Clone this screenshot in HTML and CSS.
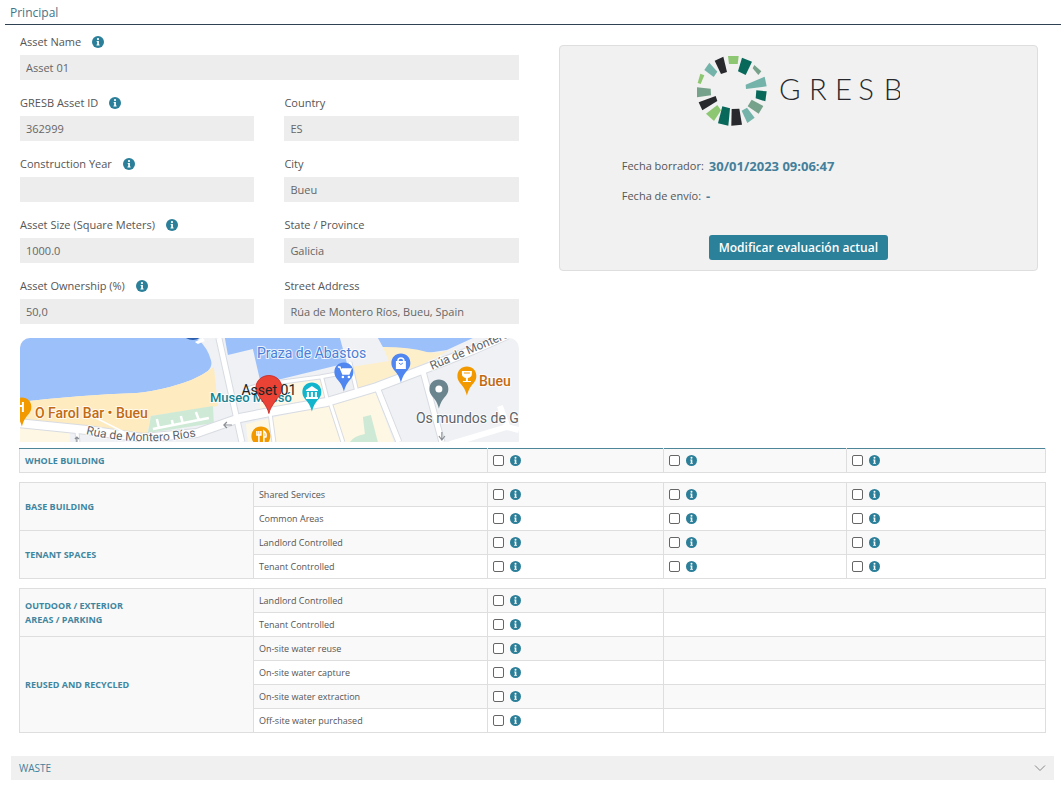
FILE: index.html
```html
<!DOCTYPE html>
<html lang="es">
<head>
<meta charset="utf-8">
<meta name="viewport" content="width=device-width, initial-scale=1">
<title>Principal</title>
<link rel="stylesheet" href="styles.css">
</head>
<body>
<svg class="defs" width="0" height="0" aria-hidden="true">
  <symbol id="info" viewBox="0 0 12 12">
    <circle cx="6" cy="6" r="6" fill="#2b7f99"/>
    <circle cx="6" cy="3.1" r="1.1" fill="#fff"/>
    <path d="M4.7 4.9h2.2v3.7h.7v1H4.5v-1h.7V5.9h-.5z" fill="#fff"/>
  </symbol>
  <symbol id="pin" viewBox="0 0 20 30">
    <path d="M10 0.500C4.500.500.500 4.600.500 10c0 5 3 7 5.500 10.500C8 23.300 9 26 10 29.500c1-3.500 2-6.200 4-9C16.500 17 19.500 15 19.500 10 19.500 4.600 15.500.500 10 .500z"/>
  </symbol>
</svg>

<h1 class="title">Principal</h1>

<main>
  <div class="top">
    <section class="asset">
      <form class="fields">
        <div class="field wide">
          <label for="name">Asset Name <svg class="info"><use href="#info"/></svg></label>
          <input id="name" value="Asset 01" readonly>
        </div>
        <div class="field">
          <label for="gid">GRESB Asset ID <svg class="info"><use href="#info"/></svg></label>
          <input id="gid" value="362999" readonly>
        </div>
        <div class="field">
          <label for="country">Country</label>
          <input id="country" value="ES" readonly>
        </div>
        <div class="field">
          <label for="year">Construction Year <svg class="info"><use href="#info"/></svg></label>
          <input id="year" value="" readonly>
        </div>
        <div class="field">
          <label for="city">City</label>
          <input id="city" value="Bueu" readonly>
        </div>
        <div class="field">
          <label for="size">Asset Size (Square Meters) <svg class="info"><use href="#info"/></svg></label>
          <input id="size" value="1000.0" readonly>
        </div>
        <div class="field">
          <label for="state">State / Province</label>
          <input id="state" value="Galicia" readonly>
        </div>
        <div class="field">
          <label for="own">Asset Ownership (%) <svg class="info"><use href="#info"/></svg></label>
          <input id="own" value="50,0" readonly>
        </div>
        <div class="field">
          <label for="street">Street Address</label>
          <input id="street" value="Rúa de Montero Ríos, Bueu, Spain" readonly>
        </div>
      </form>

      <svg class="map" viewBox="0 0 499 104" preserveAspectRatio="xMidYMid slice" role="img" aria-label="Asset 01">
        <rect width="499" height="104" fill="#eff1f4"/>
        <path d="M0 0H177Q188 10 191 22Q193 28 188 33Q176 42 150 49Q130 54 117 55Q60 57 0 64z" fill="#9cc0f9"/>
        <path d="M0 64Q60 57 117 55Q130 54 150 49Q176 42 188 33L194 29L198 68L131 78L127 97L67 90L0 82z" fill="#feebbf"/>
        <path d="M0 88L50 94V104H0z" fill="#fef7e3"/>
        <path d="M131 78L193 68L194 85L128 95z" fill="#ceead6"/>
        <path d="M133 91L189 80M137 81l2 9M161 78l2 8M176 74l3 8M152 82l1 5" stroke="#fff" stroke-width="2.500" fill="none"/>
        <path d="M205 0H320L327 25L241 46L233 11L208 17z" fill="#9cc0f9"/>
        <path d="M358 0H453L427 12L407 15L363 9z" fill="#9cc0f9"/>
        <path d="M363 9Q390 9 407 14Q420 16 430 12L402 27L337 51L331 29L369 23z" fill="#feefcb"/>
        <path d="M240 49L303 40L307 58L240 72z" fill="#fef7e3"/>
        <path d="M226 86L307 67L355 53L374 104H228z" fill="#fef7e3"/>
        <path d="M343 79L351 77L358 104H330Q334 98 345 96z" fill="#ceead6"/>
        <g fill="none" stroke="#d8dce2" stroke-linejoin="round">
          <path d="M-3 85L67 92L123 100L177 95L220 80L250 74L307 64L357 49L407 30L453 12L487 -3" stroke-width="10"/>
          <path d="M199 0L222 104M357 49L379 104M403 33L422 104" stroke-width="7"/>
          <path d="M227 51L240 47L300 39L333 33M330 24L337 54M310 64L323 104M250 74L254 104M57 92L58 104M302 40L308 64" stroke-width="5"/>
        </g>
        <g fill="none" stroke="#fff" stroke-linejoin="round">
          <path d="M-3 85L67 92L123 100L177 95L220 80L250 74L307 64L357 49L407 30L453 12L487 -3" stroke-width="8"/>
          <path d="M199 0L222 104M357 49L379 104M403 33L422 104" stroke-width="5"/>
          <path d="M227 51L240 47L300 39L333 33M330 24L337 54M310 64L323 104M250 74L254 104M57 92L58 104M302 40L308 64" stroke-width="3"/>
          <path d="M430 106L487 89L499 92M480 68L488 90" stroke-width="6"/>
          <path d="M76 80L104 94" stroke-width="1.500"/>
        </g>
        <path d="M175 4l8-4 2 3-7 3z" fill="#fff"/>
        <path d="M166 0h14q-7 4-14 0z" fill="#2c5fae"/>
        <path d="M204 87h8M207 84l-3 3 3 3M57 99v5M55 101l2-2 2 2M422 94v8M419 98l3 4 3-4" fill="none" stroke="#8b9096" stroke-width="1.200"/>
        <path id="street-line" d="M66 96Q122 110 184 97" fill="none"/>
        <g class="map-text">
          <text class="halo gray small"><textPath href="#street-line">Rúa de Montero Ríos</textPath></text>
          <text class="halo gray small" transform="translate(412 32) rotate(-23)">Rúa de Montero</text>
          <text class="halo blue" x="237" y="20">Praza de Abastos</text>
          <text class="halo orange" x="15" y="80">O Farol Bar • Bueu</text>
          <text class="halo teal" x="190" y="64">Museo Massó</text>
          <text class="halo orange" x="459" y="48">Bueu</text>
          <text class="halo gray" x="396" y="85">Os mundos de G</text>
        </g>
        <use href="#pin" x="-8" y="59" width="20" height="30" fill="#f29900"/>
        <path d="M-1 64v10M3 64v4h-4M3 74v-6" stroke="#fff" stroke-width="2" fill="none"/>
        <use href="#pin" x="231" y="88" width="20" height="30" fill="#f29900"/>
        <path d="M237 93v4h4v-4M239 93v11M244 104v-11q3 2 2 6h-2" stroke="#fff" stroke-width="1.500" fill="none"/>
        <use href="#pin" x="282" y="44" width="20" height="30" fill="#12b5cb"/>
        <path d="M286 52l6-4 6 4v1h-12zM287 54h2v5h-2zM291 54h2v5h-2zM295 54h2v5h-2zM286 59h12v2h-12z" fill="#fff"/>
        <use href="#pin" x="314" y="24" width="20" height="30" fill="#4f86f0"/>
        <path d="M318 29h2l3 7h6l2-5h-9" fill="none" stroke="#fff" stroke-width="1.500"/>
        <path d="M321 31h10l-2 5h-6z" fill="#fff"/>
        <circle cx="323" cy="39" r="1.300" fill="#fff"/><circle cx="329" cy="39" r="1.300" fill="#fff"/>
        <use href="#pin" x="371" y="15" width="20" height="30" fill="#4f86f0"/>
        <path d="M376 23h10v8h-10z" fill="#fff"/>
        <path d="M378 23q0-3 3-3t3 3" fill="none" stroke="#fff" stroke-width="1.500"/>
        <path d="M379 25q2 3 4 0" fill="none" stroke="#4f86f0"/>
        <use href="#pin" x="409" y="41" width="20" height="30" fill="#6b858f"/>
        <circle cx="419" cy="51" r="3.500" fill="#fff"/>
        <use href="#pin" x="437" y="28" width="20" height="30" fill="#f29900"/>
        <path d="M442 33h10v3q0 3-4 4v3h3v1h-8v-1h3v-3q-4-1-4-4z" fill="#fff"/>
        <path d="M444 35h6" stroke="#f29900"/>
        <path d="M249 37.500c-7.500 0-13 5.500-13 12.500 0 5 3 8 6.500 13 3.500 5 5.500 8 6.500 12.500 1-4.500 3-7.500 6.500-12.500 3.500-5 6.500-8 6.500-13 0-7-5.500-12.500-13-12.500z" fill="#ea4335" stroke="#c5221f" stroke-width=".800"/>
        <text class="pin-label" x="249" y="57" text-anchor="middle">Asset 01</text>
      </svg>
    </section>

    <aside class="panel">
      <svg class="logo" viewBox="54 30 612 216" role="img" aria-label="GRESB">
        <g fill="#8dc771">
          <path d="M150 33L182 33 179 57 153 57z"/>
          <path d="M118 180L129 196 108 228 84 206z"/>
          <path d="M67 86L79 91 68 117 59 114z"/>
        </g>
        <g fill="#08685a">
          <path d="M192 38L222 50 203 90 180 79z"/>
          <path d="M235 136L266 139 262 169 233 160z"/>
          <path d="M133 184L156 190 151 242 120 235z"/>
        </g>
        <g fill="#76a18a">
          <path d="M229 60L250 79 241 90 224 70z"/>
          <path d="M221 164L256 183 242 206 209 184z"/>
          <path d="M57 127L98 131 99 151 57 157z"/>
        </g>
        <g fill="#73b3aa">
          <path d="M260 95L266 124 204 132 203 119z"/>
          <path d="M207 188L230 218 208 234 191 197z"/>
          <path d="M94 53L118 80 107 96 79 75z"/>
        </g>
        <g fill="#28292d">
          <path d="M161 192L184 191 192 239 160 242z"/>
          <path d="M113 153L118 168 73 196 62 172z"/>
          <path d="M136 35L147 81 129 87 110 47z"/>
        </g>
        <text class="wordmark" x="303 393 471 541 617" y="164">GRESB</text>
      </svg>
      <dl class="dates">
        <div><dt>Fecha borrador:</dt><dd>30/01/2023 09:06:47</dd></div>
        <div><dt>Fecha de envío:</dt><dd>-</dd></div>
      </dl>
      <button class="primary" type="button">Modificar evaluación actual</button>
    </aside>
  </div>

  <div class="tables">
    <table class="grid accent">
      <colgroup><col class="c1"><col class="c2"><col class="c3"><col class="c4"><col></colgroup>
      <tr>
        <th colspan="2" scope="row">WHOLE BUILDING</th>
        <td><label class="check"><input type="checkbox" aria-label="Whole building 1"><svg class="info"><use href="#info"/></svg></label></td>
        <td><label class="check"><input type="checkbox" aria-label="Whole building 2"><svg class="info"><use href="#info"/></svg></label></td>
        <td><label class="check"><input type="checkbox" aria-label="Whole building 3"><svg class="info"><use href="#info"/></svg></label></td>
      </tr>
    </table>

    <table class="grid">
      <colgroup><col class="c1"><col class="c2"><col class="c3"><col class="c4"><col></colgroup>
      <tr>
        <th rowspan="2">BASE BUILDING</th>
        <td>Shared Services</td>
        <td><label class="check"><input type="checkbox" aria-label="Shared Services 1"><svg class="info"><use href="#info"/></svg></label></td>
        <td><label class="check"><input type="checkbox" aria-label="Shared Services 2"><svg class="info"><use href="#info"/></svg></label></td>
        <td><label class="check"><input type="checkbox" aria-label="Shared Services 3"><svg class="info"><use href="#info"/></svg></label></td>
      </tr>
      <tr>
        <td>Common Areas</td>
        <td><label class="check"><input type="checkbox" aria-label="Common Areas 1"><svg class="info"><use href="#info"/></svg></label></td>
        <td><label class="check"><input type="checkbox" aria-label="Common Areas 2"><svg class="info"><use href="#info"/></svg></label></td>
        <td><label class="check"><input type="checkbox" aria-label="Common Areas 3"><svg class="info"><use href="#info"/></svg></label></td>
      </tr>
      <tr>
        <th rowspan="2">TENANT SPACES</th>
        <td>Landlord Controlled</td>
        <td><label class="check"><input type="checkbox" aria-label="Landlord Controlled 1"><svg class="info"><use href="#info"/></svg></label></td>
        <td><label class="check"><input type="checkbox" aria-label="Landlord Controlled 2"><svg class="info"><use href="#info"/></svg></label></td>
        <td><label class="check"><input type="checkbox" aria-label="Landlord Controlled 3"><svg class="info"><use href="#info"/></svg></label></td>
      </tr>
      <tr>
        <td>Tenant Controlled</td>
        <td><label class="check"><input type="checkbox" aria-label="Tenant Controlled 1"><svg class="info"><use href="#info"/></svg></label></td>
        <td><label class="check"><input type="checkbox" aria-label="Tenant Controlled 2"><svg class="info"><use href="#info"/></svg></label></td>
        <td><label class="check"><input type="checkbox" aria-label="Tenant Controlled 3"><svg class="info"><use href="#info"/></svg></label></td>
      </tr>
    </table>

    <table class="grid">
      <colgroup><col class="c1"><col class="c2"><col class="c3"><col></colgroup>
      <tr>
        <th rowspan="2">OUTDOOR / EXTERIOR<br>AREAS / PARKING</th>
        <td>Landlord Controlled</td>
        <td><label class="check"><input type="checkbox" aria-label="Outdoor, Landlord Controlled"><svg class="info"><use href="#info"/></svg></label></td>
        <td></td>
      </tr>
      <tr>
        <td>Tenant Controlled</td>
        <td><label class="check"><input type="checkbox" aria-label="Outdoor, Tenant Controlled"><svg class="info"><use href="#info"/></svg></label></td>
        <td></td>
      </tr>
      <tr>
        <th rowspan="4">REUSED AND RECYCLED</th>
        <td>On-site water reuse</td>
        <td><label class="check"><input type="checkbox" aria-label="On-site water reuse"><svg class="info"><use href="#info"/></svg></label></td>
        <td></td>
      </tr>
      <tr>
        <td>On-site water capture</td>
        <td><label class="check"><input type="checkbox" aria-label="On-site water capture"><svg class="info"><use href="#info"/></svg></label></td>
        <td></td>
      </tr>
      <tr>
        <td>On-site water extraction</td>
        <td><label class="check"><input type="checkbox" aria-label="On-site water extraction"><svg class="info"><use href="#info"/></svg></label></td>
        <td></td>
      </tr>
      <tr>
        <td>Off-site water purchased</td>
        <td><label class="check"><input type="checkbox" aria-label="Off-site water purchased"><svg class="info"><use href="#info"/></svg></label></td>
        <td></td>
      </tr>
    </table>
  </div>

  <button class="accordion" type="button" aria-expanded="false">
    <span>WASTE</span>
    <svg viewBox="0 0 12 12" width="12" height="12" aria-hidden="true"><path d="M1 3.500l5 5 5-5" fill="none" stroke="#888" stroke-width="1"/></svg>
  </button>
</main>
</body>
</html>
```

FILE: styles.css
```css
* { box-sizing: border-box; }

body {
  margin: 0;
  background: #fff;
  color: #555;
  font: 11px/18px "Open Sans", "Liberation Sans", sans-serif;
}

.defs { position: absolute; }

.title {
  margin: 0 0 0 5px;
  padding: 3px 5px 2px;
  border-bottom: 1px solid #2f4254;
  color: #447386;
  font-size: 12px;
  font-weight: 400;
  line-height: 19px;
}

.top {
  display: grid;
  grid-template-columns: 51fr 49fr;
  gap: 40px;
  align-items: start;
  padding: 8px 23px 0 20px;
}

.fields {
  display: grid;
  grid-template-columns: 1fr 1fr;
  gap: 14px 30px;
}

.field { display: flex; flex-direction: column; gap: 4px; }
.wide { grid-column: 1 / -1; }
.field label { display: flex; align-items: center; gap: 11px; height: 18px; }
.info { width: 12px; height: 12px; flex: none; }

.field input {
  width: 100%;
  height: 25px;
  padding: 0 6px;
  border: 0;
  border-radius: 0;
  background: #ededed;
  color: #666;
  font: inherit;
}

.map {
  display: block;
  width: 100%;
  height: 104px;
  margin-top: 14px;
  border-radius: 10px 10px 0 0;
}

.map-text { font: 500 14px Roboto, sans-serif; }
.halo { paint-order: stroke; stroke: #fff; stroke-width: 2px; stroke-opacity: .8; }
.small { font-size: 12px; font-weight: 400; }
.gray { fill: #5f6368; font-weight: 400; }
.blue { fill: #4a80d8; font-weight: 400; }
.orange { fill: #c26a14; }
.teal { fill: #138293; font-size: 13px; }
.pin-label { font: 14px Roboto, sans-serif; fill: #222; }

.panel {
  display: flex;
  flex-direction: column;
  align-items: center;
  margin-top: 12px;
  padding: 9px 12px 10px;
  border: 1px solid #dedede;
  border-radius: 4px;
  background: #f1f1f1;
}

.logo { width: 204px; height: 72px; }
.wordmark { font: 300 88px Lato, sans-serif; fill: #28292d; }

.dates { align-self: stretch; margin: 24px 0 0 50px; }
.dates div { display: flex; align-items: center; gap: 5px; height: 30px; }
.dates dd { margin: 0; color: #447f9b; font-size: 13px; font-weight: 700; }

.primary {
  height: 25px;
  margin-top: 24px;
  padding: 0 10px;
  border: 0;
  border-radius: 3px;
  background: #2b809a;
  color: #fff;
  font: 600 12px "Open Sans", sans-serif;
}

.tables {
  display: grid;
  gap: 9px;
  padding: 6px 15px 0 19px;
}

.grid {
  width: 100%;
  table-layout: fixed;
  border-collapse: collapse;
  font-size: 9px;
  line-height: 14px;
}

.c1 { width: 22.8%; }
.c2 { width: 22.8%; }
.c3 { width: 17.2%; }
.c4 { width: 17.8%; }

.grid th, .grid td {
  height: 24px;
  padding: 0 5px;
  border: 1px solid #dedede;
  text-align: left;
}
.grid th { background: #f9f9f9; color: #3f86a0; font-weight: 700; }
.grid tr:nth-child(odd) td { background: #f9f9f9; }
.accent th, .accent td { border-top-color: #4d8797; }

.check { display: flex; align-items: center; gap: 6px; }
.check .info { width: 11px; height: 11px; }
.check input {
  appearance: none;
  width: 11px;
  height: 11px;
  margin: 0;
  border: 1px solid #666;
  border-radius: 2px;
  background: #fff;
}

.accordion {
  display: flex;
  align-items: center;
  justify-content: space-between;
  width: calc(100% - 18px);
  height: 24px;
  margin: 23px 7px 0 11px;
  padding: 0 8px;
  border: 0;
  background: #f0f0f0;
  color: #447f9b;
  font: 10px "Open Sans", sans-serif;
}
```
